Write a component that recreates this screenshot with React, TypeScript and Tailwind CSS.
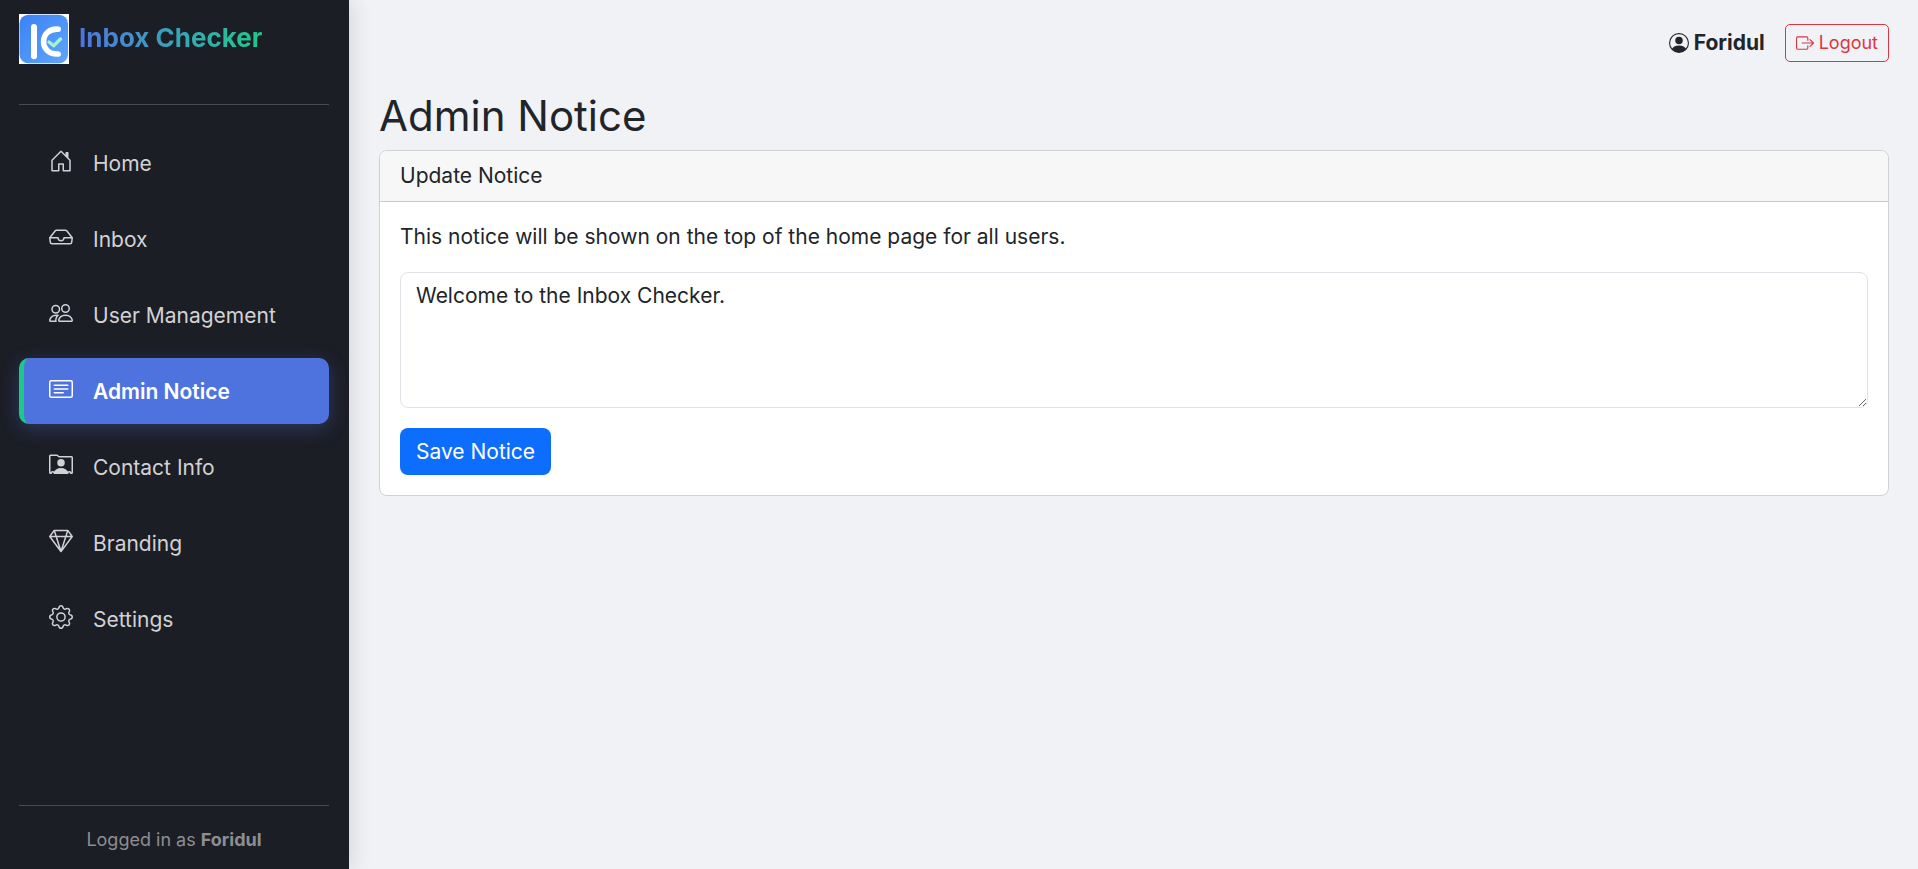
import type { ReactNode } from "react";
import {
  BsBoxArrowRight,
  BsCardText,
  BsGear,
  BsGem,
  BsHouseDoor,
  BsInbox,
  BsPeople,
  BsPersonCircle,
  BsPersonRolodex,
} from "react-icons/bs";

type NavItem = { label: string; icon: ReactNode; active?: boolean };

const navItems: NavItem[] = [
  { label: "Home", icon: <BsHouseDoor /> },
  { label: "Inbox", icon: <BsInbox /> },
  { label: "User Management", icon: <BsPeople /> },
  { label: "Admin Notice", icon: <BsCardText />, active: true },
  { label: "Contact Info", icon: <BsPersonRolodex /> },
  { label: "Branding", icon: <BsGem /> },
  { label: "Settings", icon: <BsGear /> },
];

function Logo() {
  return (
    <svg viewBox="0 0 50 50" className="size-[50px] shrink-0" aria-hidden="true">
      <defs>
        <linearGradient id="logo-fill" x1="0" y1="0" x2="1" y2="1">
          <stop offset="0" stopColor="#3b82f6" />
          <stop offset="1" stopColor="#60a5fa" />
        </linearGradient>
      </defs>
      <rect width="50" height="50" fill="#fff" />
      <rect x="0.5" y="0.7" width="48.5" height="48.6" rx="9" fill="url(#logo-fill)" />
      <g fill="none" strokeLinecap="round" strokeLinejoin="round">
        <path d="M15 13v29.300" stroke="#fff" strokeWidth="6" />
        <path d="M39.200 15.200C30 14.500 24.600 20.500 24.600 27.600S30 40.700 39.200 40" stroke="#fff" strokeWidth="5.600" />
        <path d="M30 28l4.700 3.800L41.500 25" stroke="#a7f3d0" strokeWidth="3.400" />
      </g>
    </svg>
  );
}

function Sidebar() {
  return (
    <aside className="flex w-[349px] shrink-0 flex-col bg-[#1c1e26] pl-[19px] pr-5 shadow-[5px_0_19px_rgba(0,0,0,0.1)]">
      <a href="#home" className="flex items-center gap-[10px] pt-[14px]">
        <Logo />
        <span className="bg-gradient-to-r from-[#4e73df] to-[#1cc88a] bg-clip-text pb-[2px] text-[26px] leading-8 font-bold text-transparent">
          Inbox Checker
        </span>
      </a>
      <hr className="mt-10 mb-[25px] border-[#494b52]" />
      <nav className="flex flex-col gap-[10px]">
        {navItems.map((item) => (
          <a
            key={item.label}
            href={"#" + item.label.toLowerCase().replace(" ", "-")}
            aria-current={item.active ? "page" : undefined}
            className={
              item.active
                ? "flex h-[66px] items-center gap-5 rounded-[10px] border-l-[5px] border-[#1cc88a] bg-[#4e73df] pt-[2px] pl-[25px] text-[21px] font-semibold text-white shadow-[0_5px_19px_rgba(78,115,223,0.3)]"
                : "flex h-[66px] items-center gap-5 rounded-[10px] border-l-[5px] border-transparent pt-[2px] pl-[25px] text-[21px] text-[#d2d2d4]"
            }
          >
            <span className="pb-[6px] text-[24px]">{item.icon}</span>
            {item.label}
          </a>
        ))}
      </nav>
      <div className="mt-auto border-t border-[#494b52] pt-5 pb-4 text-center text-[18px] leading-[27px] text-[#8d8e92]">
        Logged in as <strong className="font-bold">Foridul</strong>
      </div>
    </aside>
  );
}

export default function App() {
  return (
    <div className="flex min-h-screen bg-[#f0f2f5] font-['Inter','Open_Sans',sans-serif] text-[21px] leading-[30px] text-[#212529]">
      <Sidebar />
      <main className="min-w-0 flex-1 pt-6 pr-[29px] pl-[30px]">
        <header className="flex items-center justify-end gap-5">
          <div className="flex items-center gap-[5px] font-bold">
            <BsPersonCircle className="size-5" />
            Foridul
          </div>
          <button
            type="button"
            className="flex h-[38px] items-center gap-[5px] rounded-[5px] border border-[#dc3545] px-[10px] text-[18px] text-[#dc3545]"
          >
            <BsBoxArrowRight />
            Logout
          </button>
        </header>
        <h1 className="mt-[30px] text-[42px] leading-[48px]">Admin Notice</h1>
        <section className="mt-[10px] overflow-hidden rounded-[8px] border border-[#d0d1d3] bg-white">
          <h2 className="border-b border-[#c9c9ca] bg-[#f7f7f7] px-5 py-[10px]">Update Notice</h2>
          <form className="p-5" onSubmit={(event) => event.preventDefault()}>
            <label htmlFor="notice" className="block">
              This notice will be shown on the top of the home page for all users.
            </label>
            <textarea
              id="notice"
              defaultValue="Welcome to the Inbox Checker."
              className="mt-5 block h-[136px] w-full rounded-[8px] border border-[#dee2e6] px-[15px] py-2"
            />
            <button
              type="submit"
              className="mt-5 block h-[47px] rounded-[8px] bg-[#0d6efd] px-4 text-white"
            >
              Save Notice
            </button>
          </form>
        </section>
      </main>
    </div>
  );
}
